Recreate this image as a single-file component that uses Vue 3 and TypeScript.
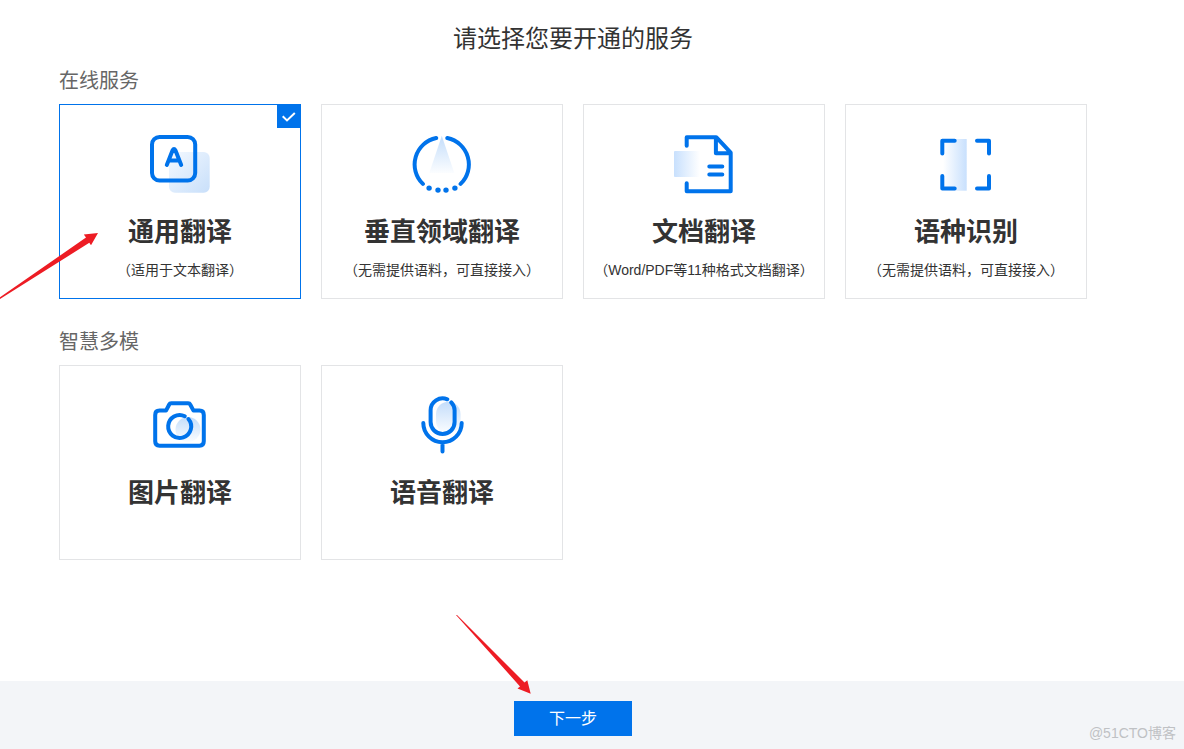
<script setup lang="ts">
import { ref } from 'vue'

type IconName = 'text' | 'domain' | 'document' | 'detect' | 'camera' | 'microphone'

interface Service {
  icon: IconName
  name: string
  note?: string
}

interface ServiceGroup {
  label: string
  services: Service[]
}

const groups: ServiceGroup[] = [
  {
    label: '在线服务',
    services: [
      { icon: 'text', name: '通用翻译', note: '（适用于文本翻译）' },
      { icon: 'domain', name: '垂直领域翻译', note: '（无需提供语料，可直接接入）' },
      { icon: 'document', name: '文档翻译', note: '（Word/PDF等11种格式文档翻译）' },
      { icon: 'detect', name: '语种识别', note: '（无需提供语料，可直接接入）' },
    ],
  },
  {
    label: '智慧多模',
    services: [
      { icon: 'camera', name: '图片翻译' },
      { icon: 'microphone', name: '语音翻译' },
    ],
  },
]

const selected = ref<IconName>('text')
</script>

<template>
  <div class="page">
    <svg class="gradients" aria-hidden="true">
      <defs>
        <linearGradient id="fade-diagonal" x1="0" y1="0" x2="1" y2="1">
          <stop offset="0" stop-color="#f4f9ff" />
          <stop offset="1" stop-color="#c8dffa" />
        </linearGradient>
        <linearGradient id="fade-down" x1="0" y1="0" x2="0" y2="1">
          <stop offset="0" stop-color="#c4ddfa" />
          <stop offset="1" stop-color="#fbfdff" />
        </linearGradient>
        <linearGradient id="fade-right" x1="0" y1="0" x2="1" y2="0">
          <stop offset="0" stop-color="#c8e0fd" />
          <stop offset="1" stop-color="#ffffff" />
        </linearGradient>
        <linearGradient id="fade-left" x1="0" y1="0" x2="1" y2="0">
          <stop offset="0" stop-color="#ffffff" />
          <stop offset="1" stop-color="#c8e0fd" />
        </linearGradient>
      </defs>
    </svg>

    <main class="content">
      <h1 class="title">请选择您要开通的服务</h1>
      <section v-for="group in groups" :key="group.label" class="group">
        <h2 class="group-label">{{ group.label }}</h2>
        <div class="cards">
          <button
            v-for="service in group.services"
            :key="service.icon"
            type="button"
            class="card"
            :class="{ selected: selected === service.icon }"
            :aria-pressed="selected === service.icon"
            @click="selected = service.icon"
          >
            <svg class="icon" viewBox="0 0 60 60" aria-hidden="true">
              <template v-if="service.icon === 'text'">
                <rect x="19" y="18" width="40.7" height="40.7" rx="6" fill="url(#fade-diagonal)" />
                <rect class="line" x="2" y="3" width="43.2" height="43.6" rx="7.5" />
                <path class="line" d="M16.8 31 22.6 16.2Q24 13.8 25.4 16.2L31.2 31M19.5 26.4H28.5" />
              </template>
              <template v-else-if="service.icon === 'domain'">
                <path d="M29.8 1.7 42.3 39H17.3Z" fill="url(#fade-down)" />
                <path class="line" d="M24.2 4A27 27 0 0 0 10.9 49.9M35.3 4A27 27 0 0 1 48.6 49.9" />
                <g class="dot">
                  <circle cx="17.1" cy="54.1" r="2.7" />
                  <circle cx="26" cy="56.1" r="2.7" />
                  <circle cx="34" cy="56.1" r="2.7" />
                  <circle cx="42.9" cy="54.1" r="2.7" />
                </g>
              </template>
              <template v-else-if="service.icon === 'document'">
                <rect y="17" width="26" height="26" rx="1" fill="url(#fade-right)" />
                <path class="line" d="M12.7 11.7V3.2H42.2L56.7 18.7V57.2H12.7V49.3M41.9 3.2V19.2H56.7M35.3 32.4H48.3M35.3 40.4H48.3" />
              </template>
              <template v-else-if="service.icon === 'detect'">
                <rect x="7" y="5" width="23.7" height="51.7" fill="url(#fade-left)" />
                <path class="line" d="M18.7 6.7H6.3V19.5M41 6.7H53V19.5M53 42V54.6H41M18.7 54.6H6.3V42" />
              </template>
              <template v-else-if="service.icon === 'camera'">
                <circle cx="38" cy="34.5" r="12.5" fill="url(#fade-down)" />
                <path class="line" d="M9.5 15.6H16L19.2 9.5Q19.8 8.3 21.2 8.3H38.2Q39.6 8.3 40.2 9.5L43.5 15.6H49.5Q53.8 15.6 53.8 20V46.3Q53.8 50.7 49.5 50.7H9.5Q5.2 50.7 5.2 46.3V20Q5.2 15.6 9.5 15.6Z" />
                <path class="line" d="M34.8 21.2A11.5 11.5 0 1 0 38.4 24" />
              </template>
              <template v-else>
                <path d="M24 19a12.3 12.3 0 0 1 24.6 0v7a12.3 12.3 0 0 1-24.6 0Z" fill="url(#fade-down)" />
                <path class="line" d="M35.3 4.3A12 12 0 0 0 18.6 15.3V27A12 12 0 0 0 42.6 27V15.3A12 12 0 0 0 39.3 7.4" />
                <path class="line" d="M11.3 28A19.2 19.2 0 0 0 49.7 28M30.5 47.2V56.5" />
              </template>
            </svg>
            <span class="name">{{ service.name }}</span>
            <span v-if="service.note" class="note">{{ service.note }}</span>
            <span v-if="selected === service.icon" class="badge">
              <svg viewBox="0 0 24 24" aria-hidden="true">
                <path d="M5.7 12.2 10 16.4 17.8 9" />
              </svg>
            </span>
          </button>
        </div>
      </section>
    </main>

    <footer class="footer">
      <div class="next-wrap">
        <button type="button" class="next">下一步</button>
        <svg class="arrow arrow-next" viewBox="0 0 76 80" aria-hidden="true">
          <path d="M0 0 1 0 68.5 67.5 71.3 65.3 74.7 78.7 61.5 73.5 64 71.5Z" />
        </svg>
      </div>
      <span class="watermark">@51CTO博客</span>
    </footer>

    <svg class="arrow arrow-card" viewBox="0 0 98 66" aria-hidden="true">
      <path d="M0 64.3 86 4.5 83.8 1.5 98 0 91 12.3 89.3 9.8 0 66Z" />
    </svg>
  </div>
</template>

<style>
body {
  margin: 0;
}
</style>

<style scoped>
.page {
  position: relative;
  display: flex;
  flex-direction: column;
  min-height: 100vh;
  overflow: hidden;
  background: #fff;
  color: #333;
  font-family: 'Liberation Sans', 'Noto Sans CJK SC', sans-serif;
}

.gradients {
  position: absolute;
  width: 0;
  height: 0;
}

.content {
  flex: 1;
  padding: 21px 97px 40px 59px;
}

.title {
  margin: 0;
  font-size: 24px;
  line-height: 36px;
  font-weight: 400;
  text-align: center;
}

.group {
  padding-top: 8px;
}

.group + .group {
  padding-top: 27px;
}

.group-label {
  margin: 0 0 7px;
  color: #666;
  font-size: 20px;
  line-height: 32px;
  font-weight: 400;
}

.cards {
  display: grid;
  grid-template-columns: repeat(4, minmax(0, 1fr));
  gap: 20px;
}

.card {
  position: relative;
  display: flex;
  flex-direction: column;
  align-items: center;
  min-height: 195px;
  padding: 29px 0 16px;
  border: 1px solid #e3e4e6;
  background: #fff;
  color: #333;
  font-family: inherit;
  cursor: pointer;
}

.card.selected {
  border-color: #0073eb;
}

.icon {
  width: 60px;
  height: 60px;
}

.line {
  fill: none;
  stroke: #0073eb;
  stroke-width: 4;
  stroke-linecap: round;
  stroke-linejoin: round;
}

.dot {
  fill: #0073eb;
}

.name {
  margin-top: 20px;
  font-size: 26px;
  line-height: 36px;
  font-weight: 700;
}

.note {
  margin-top: 10px;
  font-size: 14px;
  line-height: 20px;
  white-space: nowrap;
}

.badge {
  position: absolute;
  top: -1px;
  right: -1px;
  width: 24px;
  height: 24px;
  background: #0073eb;
}

.badge svg {
  display: block;
  fill: none;
  stroke: #fff;
  stroke-width: 2;
}

.footer {
  position: relative;
  display: flex;
  justify-content: center;
  padding: 20px 97px 13px 59px;
  background: #f3f5f8;
}

.next-wrap {
  position: relative;
}

.next {
  display: block;
  width: 118px;
  height: 35px;
  padding: 0;
  border: 0;
  background: #0073eb;
  color: #fff;
  font-family: inherit;
  font-size: 16px;
  line-height: 35px;
  cursor: pointer;
}

.arrow {
  position: absolute;
  fill: #ed1c24;
  pointer-events: none;
}

.arrow-card {
  top: 233px;
  left: 0;
  width: 98px;
  height: 66px;
}

.arrow-next {
  top: -86px;
  left: -58px;
  width: 76px;
  height: 80px;
}

.watermark {
  position: absolute;
  right: 8px;
  bottom: 6px;
  color: #bfc1c4;
  font-size: 14px;
  line-height: 20px;
}
</style>
